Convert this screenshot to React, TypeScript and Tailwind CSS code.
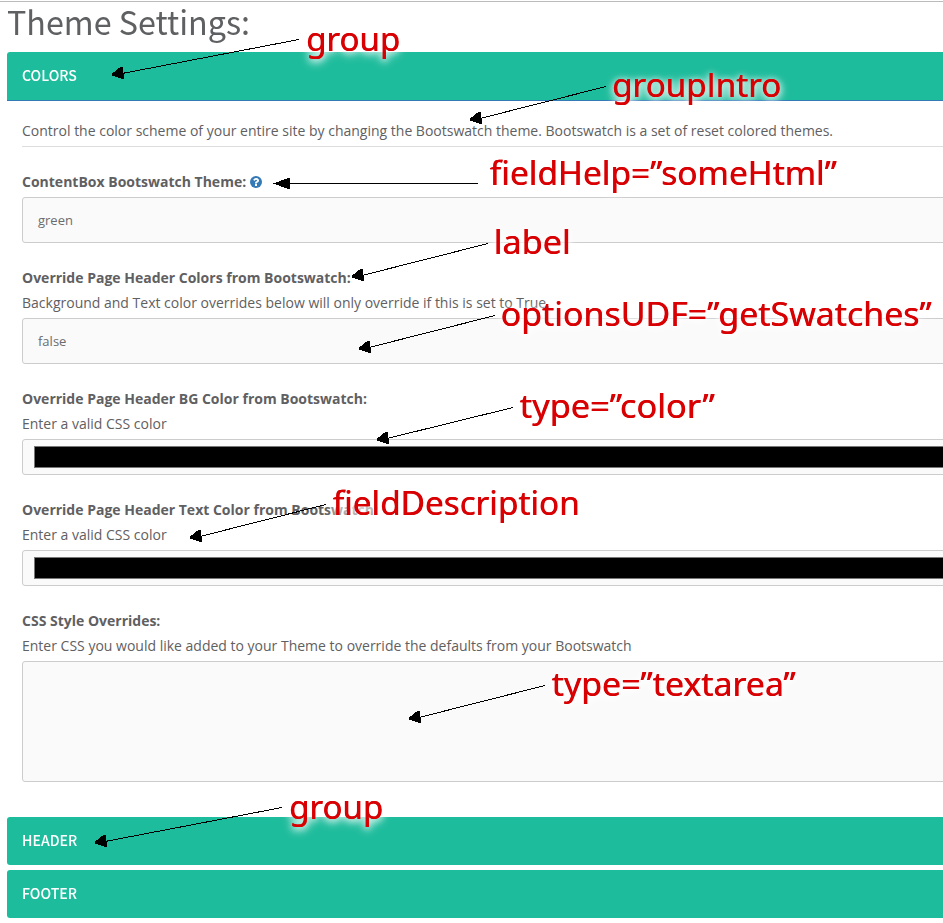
import type { ReactNode } from "react";

const SANS = "font-['Open_Sans',sans-serif]";
const SOURCE = "font-['Noto_Sans_CJK_SC',sans-serif]";

function GroupHeading({ title, open }: { title: string; open?: boolean }) {
  return (
    <div
      className={`${SOURCE} flex items-center bg-[#1dbc9c] pb-[3px] pl-[15px] text-[14.4px] leading-5 font-medium text-white ${
        open ? "h-[49px] rounded-t-[3px] border-b border-[#337ab7]" : "h-12 rounded-[3px]"
      }`}
    >
      <span className="inline-block origin-left scale-x-[0.98]">{title}</span>
    </div>
  );
}

function Field({
  label,
  help,
  description,
  children,
}: {
  label: string;
  help?: boolean;
  description?: string;
  children: ReactNode;
}) {
  return (
    <div className="mb-[25px] flex flex-col gap-[5px]">
      <div className="flex h-5 items-center font-bold whitespace-nowrap">
        {label}
        {help && (
          <svg className="ml-1 h-3 w-3" viewBox="0 0 1536 1536">
            <circle cx="768" cy="768" r="768" fill="#337ab7" />
            <path
              fill="#fff"
              d="M896 1248v-192q0-14-9-23t-23-9H672q-14 0-23 9t-9 23v192q0 14 9 23t23 9h192q14 0 23-9t9-23zm256-672q0-88-55.500-163T958 297t-170-41q-243 0-371 213-15 24 8 42l132 100q7 6 19 6 16 0 25-12 53-68 86-92 34-24 86-24 48 0 85.500 26t37.500 59q0 38-20 61t-68 45q-63 28-115.500 86.500T640 892v36q0 14 9 23t23 9h192q14 0 23-9t9-23q0-19 21.500-49.500T972 829q32-18 49-28.500t46-35 44.500-48 28-60.500 12.500-81z"
            />
          </svg>
        )}
      </div>
      {description && <div className="h-5 whitespace-nowrap">{description}</div>}
      {children}
    </div>
  );
}

function SelectBox({ value }: { value: string }) {
  return (
    <div className="flex h-[46px] items-center rounded-[3px] border border-[#ccc] bg-[#fafafa] px-[15px] text-[13px] text-[#6b6c6e]">
      {value}
    </div>
  );
}

function ColorBox() {
  return (
    <div className="h-9 rounded-[3px] border border-[#ccc] bg-[#fafafa] px-[11px] py-1.5">
      <div className="h-[22px] border border-[#777] bg-black" />
    </div>
  );
}

const GLOW =
  "[text-shadow:0.5px_0_0_#d80003] [filter:drop-shadow(0_1px_3px_rgba(255,255,255,0.7))_drop-shadow(0_2px_4px_rgba(255,255,255,0.9))]";

/* left edge, baseline and drawn width of every callout */
const notes = [
  { text: "group", x: 306, y: 51, w: 94 },
  { text: "groupIntro", x: 612, y: 97, w: 169 },
  { text: "fieldHelp=”someHtml”", x: 489.5, y: 185, w: 347 },
  { text: "label", x: 493.5, y: 254, w: 77 },
  { text: "optionsUDF=”getSwatches”", x: 500.5, y: 326, w: 431 },
  { text: "type=”color”", x: 519.5, y: 418, w: 195 },
  { text: "fieldDescription", x: 332.5, y: 515, w: 247 },
  { text: "type=”textarea”", x: 551.5, y: 696, w: 244 },
  { text: "group", x: 289, y: 819, w: 94 },
];

/* tail point and tip of every arrow */
const arrows = [
  [299, 39, 112, 75],
  [606, 86, 470, 120],
  [478, 183, 272, 183],
  [488, 243, 352, 277],
  [495, 315, 359, 349],
  [513, 407, 377, 440],
  [326, 504, 190, 538],
  [545, 685, 409, 719],
  [282, 807, 95, 843],
];

function Annotations() {
  return (
    <svg className="pointer-events-none absolute inset-0" width="943" height="923">
      {notes.map((n, i) => (
        <text
          key={i}
          x={n.x}
          y={n.y}
          textLength={n.w}
          lengthAdjust="spacingAndGlyphs"
          className={`font-['Noto_Sans',sans-serif] ${GLOW} fill-[#d80003] text-[33px]`}
        >
          {n.text.split("I").map((part, k) => (
            <tspan key={k}>
              {k > 0 && <tspan className="font-['Open_Sans',sans-serif]">I</tspan>}
              {part}
            </tspan>
          ))}
        </text>
      ))}
      {arrows.map(([x1, y1, x2, y2], i) => {
        const flat = y1 === y2;
        return (
          <g key={i} shapeRendering="crispEdges">
            <line
              x1={x1}
              y1={y1 + 0.5}
              x2={x2 + 10}
              y2={y2 - (flat ? 0 : 2) + 0.5}
              stroke="#000"
              strokeWidth="1"
            />
            <polygon
              points={flat ? "0,0 17,-6 17,6" : "0,0 0,-2 9,-9 11,-9 12,3 9,3"}
              transform={`translate(${x2 + (flat ? 1 : 0)} ${y2 + 0.5})`}
              fill="#000"
            />
          </g>
        );
      })}
    </svg>
  );
}

export default function App() {
  return (
    <div className={`${SANS} relative h-[923px] w-full overflow-hidden bg-white text-[14px] leading-5 text-[#5f6062]`}>
      <div className="w-[983px] pt-px pl-[7px]">
        <div className="-ml-[7px] h-px bg-[#bbb]" />
        <h1 className={`${SOURCE} h-[50px] origin-left scale-x-[0.978] text-[33px] leading-[39px] whitespace-nowrap`}>
          Theme Settings:
        </h1>
        <GroupHeading title="COLORS" open />
        <div className="px-[15px] pt-5 pb-[10px]">
          <p className="mb-[25px] h-[26px] border-b border-[#ddd]">
            Control the color scheme of your entire site by changing the Bootswatch theme. Bootswatch is a set of reset
            colored themes.
          </p>
          <Field label="ContentBox Bootswatch Theme:" help>
            <SelectBox value="green" />
          </Field>
          <Field
            label="Override Page Header Colors from Bootswatch:"
            description="Background and Text color overrides below will only override if this is set to True."
          >
            <SelectBox value="false" />
          </Field>
          <Field label="Override Page Header BG Color from Bootswatch:" description="Enter a valid CSS color">
            <ColorBox />
          </Field>
          <Field label="Override Page Header Text Color from Bootswatch:" description="Enter a valid CSS color">
            <ColorBox />
          </Field>
          <Field
            label="CSS Style Overrides:"
            description="Enter CSS you would like added to your Theme to override the defaults from your Bootswatch"
          >
            <div className="h-[121px] rounded-[3px] border border-[#ccc] bg-[#fafafa]" />
          </Field>
        </div>
        <div className="flex flex-col gap-[5px]">
          <GroupHeading title="HEADER" />
          <GroupHeading title="FOOTER" />
        </div>
      </div>
      <Annotations />
    </div>
  );
}
